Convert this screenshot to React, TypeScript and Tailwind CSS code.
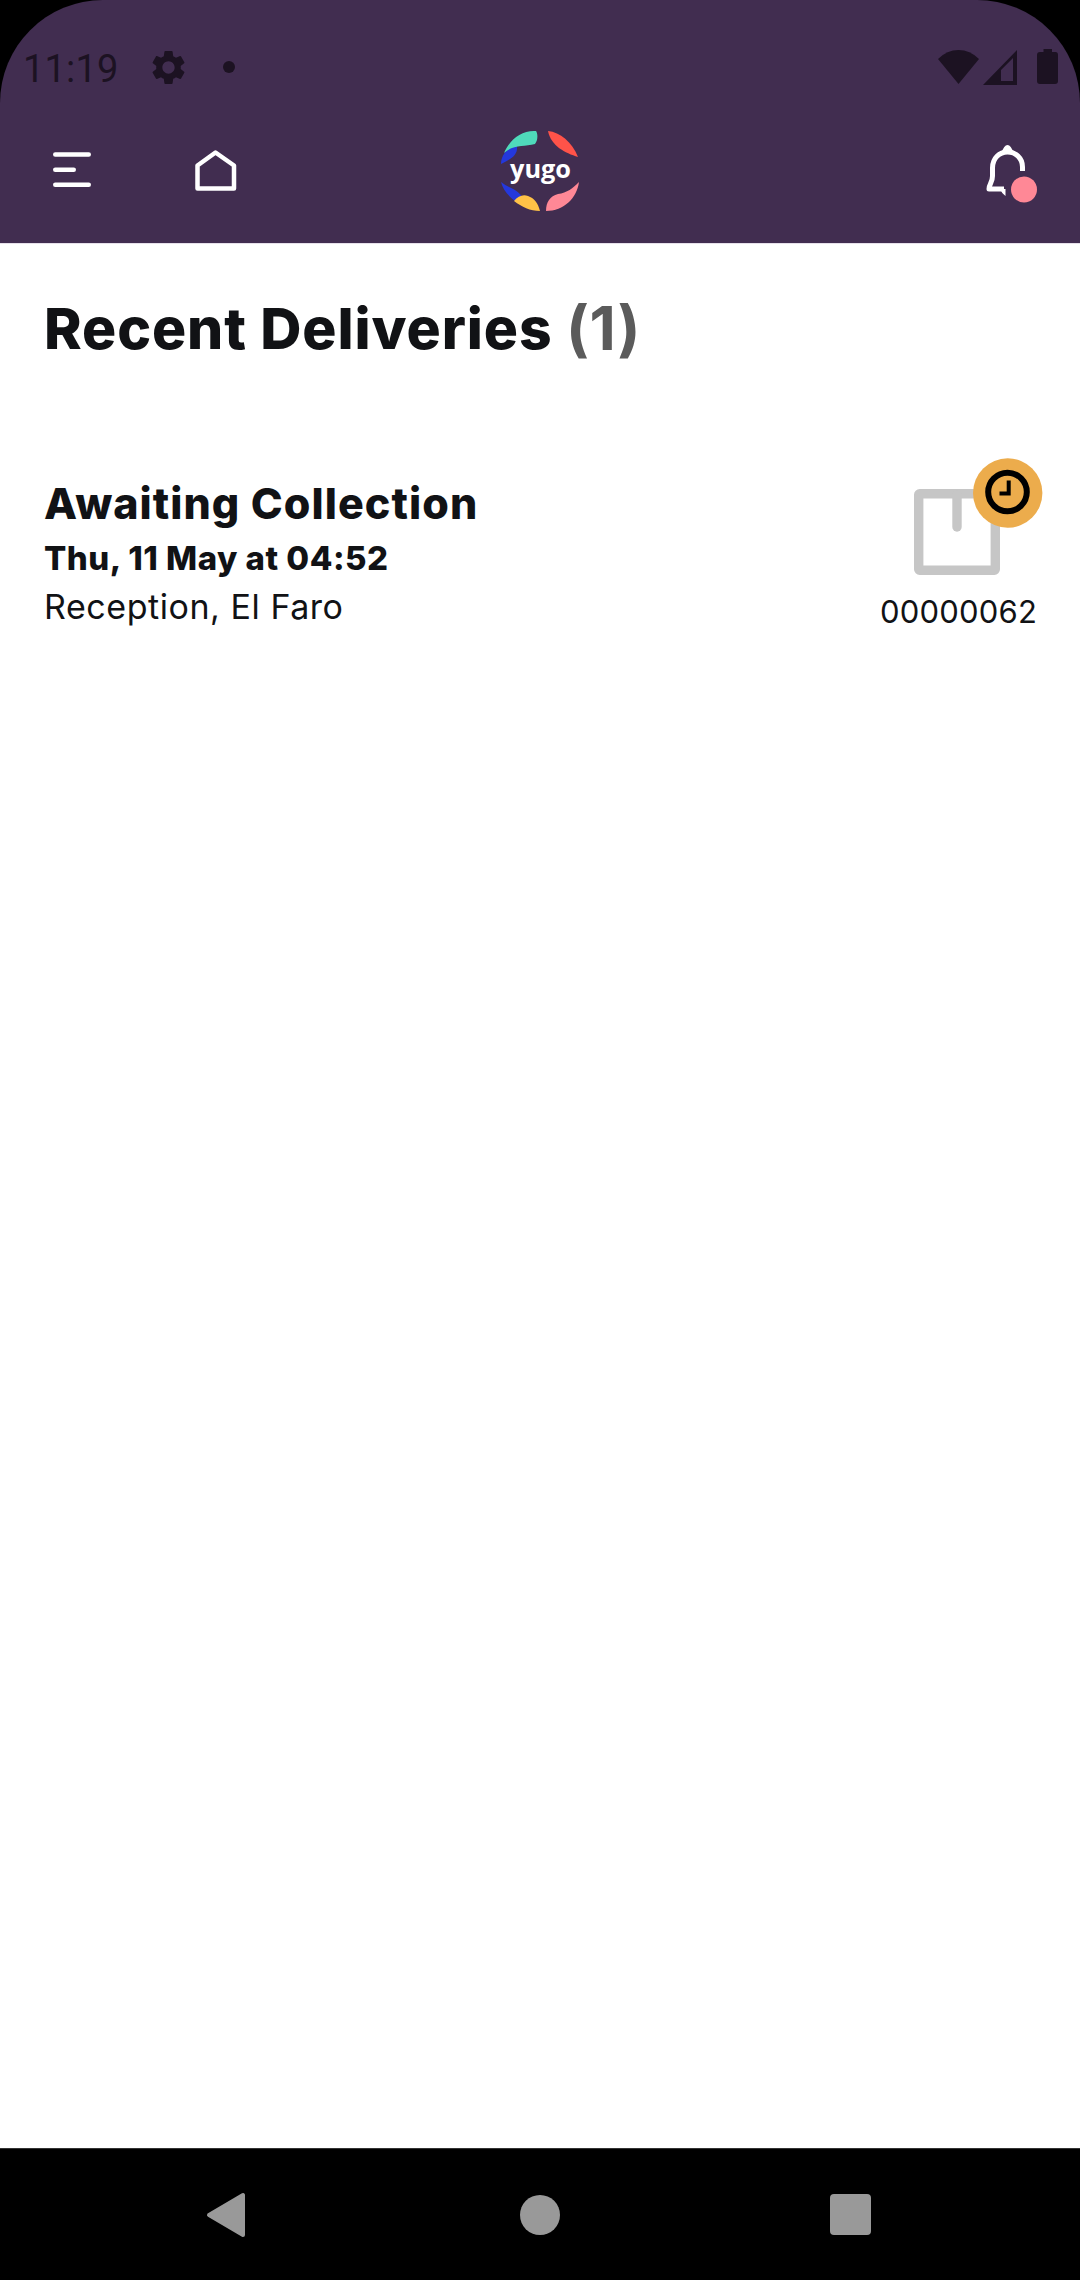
import { MdSettings } from 'react-icons/md';

const deliveries = [
  {
    status: 'Awaiting Collection',
    date: 'Thu, 11 May at 04:52',
    location: 'Reception, El Faro',
    reference: '00000062',
  },
];

function StatusBar() {
  return (
    <div className="flex h-[134px] items-center justify-between pl-[23px] pr-[21px] text-[#1c1222]">
      <div className="flex items-center">
        <span className="w-[96px] whitespace-nowrap font-['Roboto',sans-serif] text-[38px] leading-none tracking-[0.2px] pt-1">11:19</span>
        <MdSettings className="ml-[29px]" size={41} />
        <span className="ml-[34px] h-3 w-3 rounded-full bg-[#1c1222]" />
      </div>
      <svg width="121" height="36" viewBox="0 0 121 36" fill="currentColor">
        <path d="M0 10Q9 1 20.500 1T41 10L20.500 35Z" />
        <path fillRule="evenodd" d="M45 36L79 1V36ZM63 32H75V9L63 21Z" />
        <path d="M105.500 0h8.500v3h3.500q2.500 0 2.500 3v26q0 3-3 3h-15q-3 0-3-3V6q0-3 3-3h3.500Z" />
      </svg>
    </div>
  );
}

function Logo() {
  return (
    <svg width="120" height="120" viewBox="0 0 120 120">
      <path fill="#2438dc" d="M21 54C21 46 26 38 37 36C38 45 31 49 21 54Z" />
      <path fill="#4fdabb" d="M24 43C30 29 42 20 56 21C58 24 58 30 55 34C44 37 34 34 24 43Z" />
      <path fill="#ff5349" d="M68 21C80 22 92 32 98 47C85 43 71 36 68 21Z" />
      <path fill="#2438dc" d="M21 72C28 78 38 79 42 87L35 91C27 85 23 79 21 72Z" />
      <path fill="#ffc247" d="M34 91C38 86 43 84 48 86C54 88 58 93 60 101C50 101 42 97 34 91Z" />
      <path fill="#ff8896" d="M99 72C97 88 84 101 66 101C66 92 70 86 78 84C87 83 93 78 99 72Z" />
      <text
        x="30"
        y="67.500"
        textLength="61"
        lengthAdjust="spacingAndGlyphs"
        className="fill-white font-['Open_Sans',sans-serif] text-[25px] font-bold"
      >
        yugo
      </text>
    </svg>
  );
}

function AppBar() {
  return (
    <div className="flex h-[109px] items-start justify-between pl-[53px] pr-[40px]">
      <div className="flex w-[427px] items-center pt-[15px]">
        <svg width="38" height="42" viewBox="0 0 38 42" stroke="white" strokeWidth="4.500" strokeLinecap="round">
          <path d="M2.250 5.500H35.750M2.250 20.800H20.750M2.250 35.700H35.750" />
        </svg>
        <svg className="ml-[104px]" width="42" height="42" viewBox="0 0 42 42" fill="none" stroke="white" strokeWidth="4.500" strokeLinejoin="round">
          <path d="M2.500 16.500L20.500 3.500L39 16.500V39.500H2.500Z" />
        </svg>
      </div>
      <div className="-mt-6">
        <Logo />
      </div>
      <div className="flex w-[440px] justify-end pt-[9px]">
        <svg width="54" height="62" viewBox="0 0 54 62" fill="none">
          <path d="M36.500 28V24C36.500 15 29.500 9 21.500 9S6.500 15 6.500 25V33C6.500 40 3 41 3 46H18" stroke="white" strokeWidth="5" strokeLinejoin="round" />
          <path d="M15.500 10Q18 2 21.500 2T27.500 10Z M14 46H19.500V53Q15.500 50 14 46Z" fill="white" />
          <circle cx="38" cy="46.500" r="13" fill="#ff8896" />
        </svg>
      </div>
    </div>
  );
}

function PackageIcon() {
  return (
    <svg width="130" height="120" viewBox="0 0 130 120" fill="none">
      <rect x="5.700" y="38.700" width="76.600" height="76.600" rx="1" stroke="#c6c6c6" strokeWidth="9.400" strokeLinejoin="round" />
      <path d="M44 40V72" stroke="#c6c6c6" strokeWidth="9.400" strokeLinecap="round" />
      <circle cx="94.700" cy="38" r="34.700" fill="#ecac4c" />
      <circle cx="94.500" cy="37" r="19.300" stroke="black" strokeWidth="6" />
      <path d="M95.700 25.500V38.500H86.500" stroke="black" strokeWidth="4" />
    </svg>
  );
}

function NavBar() {
  return (
    <nav className="flex h-[132px] items-center justify-between border-t border-[#333] bg-black pl-[206px] pr-[209px] text-[#999]">
      <div className="flex w-[44px]">
        <svg width="40" height="46" viewBox="0 0 40 46" fill="currentColor" stroke="currentColor" strokeWidth="4" strokeLinejoin="round">
          <path d="M3 23L37 3V43Z" />
        </svg>
      </div>
      <span className="h-10 w-10 rounded-full bg-[#999]" />
      <span className="h-[41px] w-[41px] rounded-[4px] bg-[#999]" />
    </nav>
  );
}

export default function App() {
  return (
    <div className="flex h-[2280px] w-[1080px] flex-col overflow-hidden bg-black font-['Inter',sans-serif] text-[#111215]">
      <header className="h-[243px] shrink-0 rounded-t-[103px] bg-[#412d50]">
        <StatusBar />
        <AppBar />
      </header>

      <main className="flex-1 border-t border-[#e6e0ea] bg-white px-11 pt-[49px]">
        <h1 className="flex h-[70px] items-center whitespace-nowrap text-[57px] font-extrabold leading-none">
          <span className="w-[522px] tracking-[0.9px]">Recent Deliveries</span>
          <span className="text-[61px] font-bold tracking-[0.5px] text-[#5b5b5b]">(1)</span>
        </h1>

        {/* Delivery list */}
        {deliveries.map((item) => (
          <div key={item.reference} className="mt-[92px] flex items-start justify-between">
            <div className="whitespace-nowrap pt-[23px]">
              <h2 className="text-[43px] font-extrabold leading-[50px] tracking-[1.05px]">{item.status}</h2>
              <p className="mt-[7px] text-[33px] font-extrabold leading-[46px] tracking-[0.5px]">{item.date}</p>
              <p className="mt-[3px] text-[34px] leading-[46px] tracking-[0.55px]">{item.location}</p>
            </div>
            <div className="flex w-[156px] flex-col">
              <div className="ml-[33px] w-[130px]">
                <PackageIcon />
              </div>
              <span className="mt-[15px] text-[31px] leading-[44px] tracking-[0.2px]">{item.reference}</span>
            </div>
          </div>
        ))}
      </main>

      <NavBar />
    </div>
  );
}
